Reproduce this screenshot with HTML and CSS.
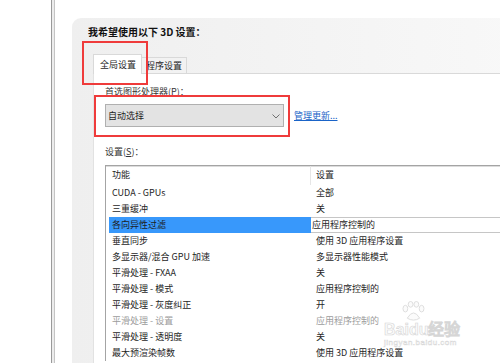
FILE: index.html
```html
<!DOCTYPE html>
<html lang="zh-CN">
<head>
  <meta charset="UTF-8">
  <title>管理 3D 设置</title>
  <link rel="stylesheet" href="styles.css">
</head>
<body>
  <div class="side"></div>
  <div class="splitter"></div>
  <div class="main">
    <div class="panel">
      <div class="title">我希望使用以下 3D 设置：</div>
      <div class="tabs">
        <div class="tab active">全局设置</div>
        <div class="tab">程序设置</div>
      </div>
      <div class="content">
        <div class="label">首选图形处理器(<u>P</u>)：</div>
        <div class="gpu-row">
          <div class="select">
            <span>自动选择</span>
            <svg class="chevron" width="8" height="5" viewBox="0 0 8 5"><polyline points="0.5,0.5 4,4 7.5,0.5" fill="none" stroke="#707070" stroke-width="1"/></svg>
          </div>
          <a class="link" href="#">管理更新...</a>
        </div>
        <div class="label settings-label">设置(<u>S</u>)：</div>
        <div class="list">
          <div class="row head"><div class="c1">功能</div><div class="c2">设置</div></div>
          <div class="row"><div class="c1">CUDA - GPUs</div><div class="c2">全部</div></div>
          <div class="row"><div class="c1">三重缓冲</div><div class="c2">关</div></div>
          <div class="row selected"><div class="c1">各向异性过滤</div><div class="c2">应用程序控制的</div></div>
          <div class="row"><div class="c1">垂直同步</div><div class="c2">使用 3D 应用程序设置</div></div>
          <div class="row"><div class="c1">多显示器/混合 GPU 加速</div><div class="c2">多显示器性能模式</div></div>
          <div class="row"><div class="c1">平滑处理 - FXAA</div><div class="c2">关</div></div>
          <div class="row"><div class="c1">平滑处理 - 模式</div><div class="c2">应用程序控制的</div></div>
          <div class="row"><div class="c1">平滑处理 - 灰度纠正</div><div class="c2">开</div></div>
          <div class="row disabled"><div class="c1">平滑处理 - 设置</div><div class="c2">应用程序控制的</div></div>
          <div class="row"><div class="c1">平滑处理 - 透明度</div><div class="c2">关</div></div>
          <div class="row"><div class="c1">最大预渲染帧数</div><div class="c2">使用 3D 应用程序设置</div></div>
        </div>
      </div>
    </div>
  </div>

  <!-- annotation boxes drawn over the screenshot -->
  <div class="mark mark-tab"></div>
  <div class="mark mark-gpu"></div>

  <div class="watermark">
    <svg class="paw" width="30" height="21" viewBox="0 0 30 22">
      <ellipse cx="7" cy="8" rx="2.5" ry="3.5" fill="#fbfbfb" stroke="#dcdcdc"/>
      <ellipse cx="12.5" cy="3.5" rx="2.5" ry="3" fill="#fbfbfb" stroke="#dcdcdc"/>
      <ellipse cx="18.5" cy="3.5" rx="2.5" ry="3" fill="#fbfbfb" stroke="#dcdcdc"/>
      <ellipse cx="24" cy="8" rx="2.5" ry="3.5" fill="#fbfbfb" stroke="#dcdcdc"/>
      <path d="M9 18 Q15.5 7 22 18 Q15.5 22 9 18 Z" fill="#fbfbfb" stroke="#dcdcdc"/>
    </svg>
    <div class="wm-name">Bai<span class="wm-du">du</span>经验</div>
    <div class="wm-url">jingyan.baidu.com</div>
  </div>
</body>
</html>
```

FILE: styles.css
```css
body {
  margin: 0;
  width: 500px;
  height: 363px;
  overflow: hidden;
  display: flex;
  background: #fff;
  font-family: "Noto Sans CJK SC", "Noto Sans", sans-serif;
  font-size: 9px;
  color: #1e1e1e;
  position: relative;
}

.side {
  width: 51px;
}

.splitter {
  width: 2px;
  background: #ececec;
  border-left: 1px solid #9a9a9a;
  border-right: 1px solid #c4c4c4;
}

.main {
  flex: 1;
  padding: 18px 0 0 17px;
  display: flex;
  flex-direction: column;
}

.panel {
  flex: 1;
  display: flex;
  flex-direction: column;
  background: linear-gradient(to right, #efefef, #f8f8f8);
  border-radius: 9px 0 0 0;
  margin-right: -20px;
}

.title {
  font-size: 10px;
  font-weight: bold;
  line-height: 14px;
  padding: 7px 0 0 16px;
  color: #111;
}

.tabs {
  display: flex;
  align-items: flex-end;
  margin: 15px 0 0 21px;
  height: 19px;
}

.tab {
  height: 15px;
  line-height: 16px;
  padding: 0 4px;
  font-size: 9px;
  background: #f2f2f2;
  border: 1px solid #d9d9d9;
  border-bottom: none;
  border-left: none;
}

.tab.active {
  height: 19px;
  line-height: 19px;
  padding: 0 5px 0 6px;
  background: #fff;
  border-left: 1px solid #d9d9d9;
  position: relative;
  z-index: 1;
  margin-bottom: -1px;
}

.content {
  flex: 1;
  margin-left: 21px;
  background: #fff;
  border-top: 1px solid #d9d9d9;
  border-left: 1px solid #e2e2e2;
  padding: 11px 0 0 11px;
}

.label {
  line-height: 14px;
  color: #333;
}

.gpu-row {
  display: flex;
  align-items: center;
  margin-top: 5px;
}

.select {
  width: 172px;
  height: 21px;
  background: #e3e3e3;
  border: 1px solid #b0b0b0;
  display: flex;
  align-items: center;
  justify-content: space-between;
  padding: 0 3px 0 2px;
}

.chevron {
  margin-top: 2px;
}

.link {
  margin-left: 10px;
  color: #1a64c8;
  text-decoration: underline;
}

.settings-label {
  margin-top: 18px;
}

.list {
  margin-top: 6px;
  border-top: 1px solid #a4a4a4;
  border-left: 1px solid #a4a4a4;
  box-shadow: inset 0 1px 0 #dcdcdc;
}

.row {
  display: grid;
  grid-template-columns: 205px 1fr;
  height: 16px;
  line-height: 16px;
}

.row .c1 {
  padding-left: 6px;
  white-space: nowrap;
}

.row .c2 {
  padding-left: 5px;
  white-space: nowrap;
}

.row.head {
  height: 19px;
  line-height: 17px;
}

.row.head .c1 {
  border-right: 1px solid #e6e6e6;
}

.row.selected .c1 {
  background: #3898fb;
  margin-left: 3px;
  padding-left: 3px;
}

.row.selected .c2 {
  padding-left: 1px;
  border-top: 1px solid #c6c6c6;
  border-bottom: 1px solid #c6c6c6;
  line-height: 14px;
}

.row.disabled {
  color: #9c9c9c;
}

.mark {
  position: absolute;
  border: 2px solid #ef3b3b;
}

.mark-tab {
  left: 82px;
  top: 41px;
  width: 62px;
  height: 40px;
}

.mark-gpu {
  left: 94px;
  top: 95px;
  width: 192px;
  height: 38px;
}

.watermark {
  position: absolute;
  left: 384px;
  top: 301px;
}

.paw {
  display: block;
  margin-left: 14px;
}

.wm-name {
  font-family: "Liberation Sans", sans-serif;
  font-size: 16px;
  font-weight: bold;
  line-height: 15px;
  color: #fbfbfb;
  -webkit-text-stroke: 0.6px #d6d6d6;
}

.wm-url {
  font-family: "Liberation Sans", sans-serif;
  font-size: 8px;
  line-height: 9px;
  margin-top: 1px;
  letter-spacing: 0.5px;
  color: #fbfbfb;
  -webkit-text-stroke: 0.4px #d6d6d6;
}
```
